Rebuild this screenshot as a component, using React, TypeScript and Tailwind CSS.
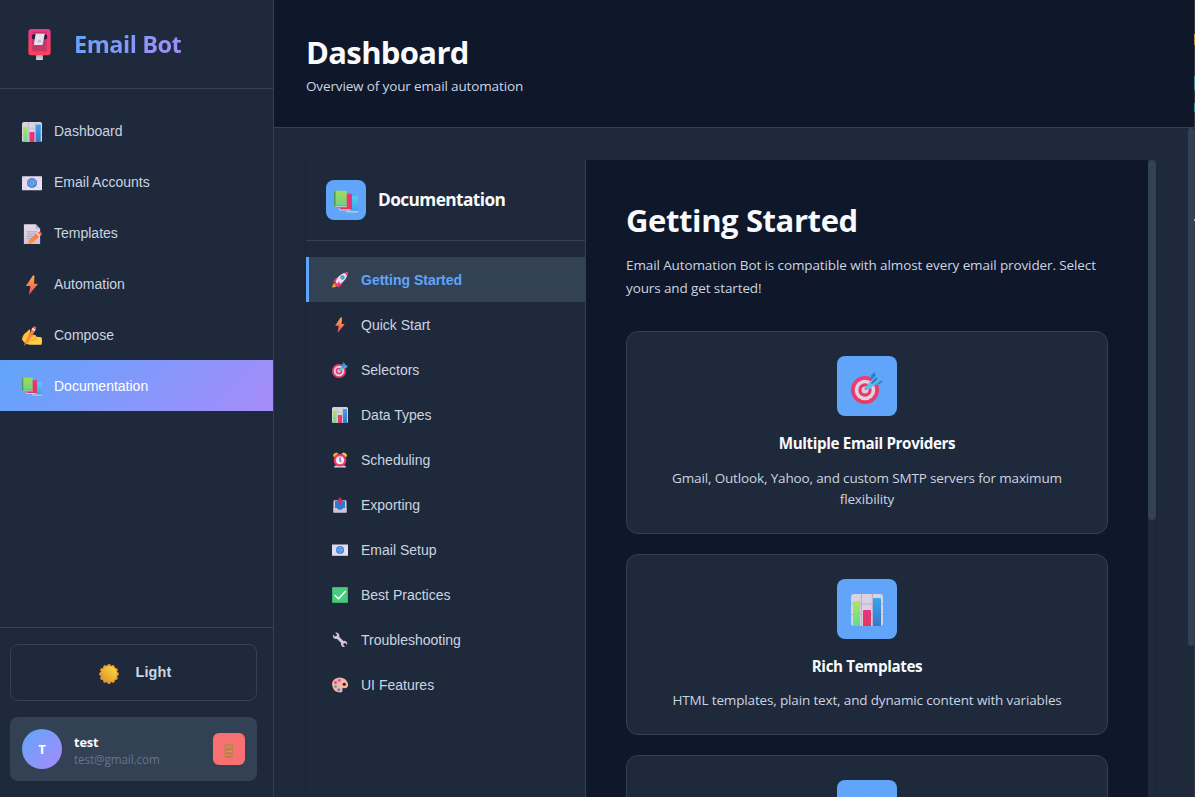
import React from "react";

type IconName =
  | "postbox" | "chart" | "email" | "memo" | "bolt" | "writing" | "books" | "sun" | "door"
  | "rocket" | "target" | "alarm" | "outbox" | "check" | "wrench" | "palette";

const drawings: Record<IconName, React.ReactNode> = {
  postbox: (
    <>
      <rect x="12.5" y="25" width="7" height="7" fill="url(#post)" />
      <rect x="4.5" y="0" width="23" height="27" rx="3" fill="url(#red)" />
      <rect x="8.5" y="2.8" width="15" height="1" rx=".5" fill="#c42a62" />
      <rect x="8.5" y="9" width="15" height="14" rx="1" fill="#c33866" />
      <rect x="8" y="5.2" width="16" height="5.4" rx="2.7" fill="#3c1440" />
      <path d="M12 5H21.500l-2.400 11.5h-9Z" fill="#e6dfee" />
      <path d="M14.500 11h3.500l-.6 3h-3.500Z" fill="#c8bed2" />
    </>
  ),
  chart: (
    <>
      <rect x="0" y="0" width="32" height="32" rx="3" fill="#d9d2e2" />
      <path d="M10.4 0v32M21.4 0v32M0 10h32M0 20.5h32" stroke="#b9b0c3" strokeWidth="1.1" />
      <path d="M2 7.5Q2 7 2.7 7H9v25H2Z" fill="url(#green)" />
      <path d="M12 17q0-1 1-1h6q1 0 1 1v15h-8Z" fill="url(#pink)" />
      <path d="M22 5q0-1 1-1h6q1 0 1 1v27h-8Z" fill="url(#blue)" />
    </>
  ),
  email: (
    <>
      <rect x="0" y="5" width="32" height="22.5" rx="1" fill="url(#paper)" />
      <path d="m1 6 12 10M31 6 19 16M1 27l11-9M31 27l-11-9" stroke="#cbbcdc" strokeWidth=".9" />
      <circle cx="16" cy="16" r="8" fill="#3f7fd4" />
      <circle cx="16" cy="16" r="2.4" fill="none" stroke="#a3c8f2" strokeWidth="1.1" />
      <path d="M18.4 13.5v3q0 2 1.6 1.700 1.500-.6 1.200-3A5.300 5.300 0 1 0 18.700 20.400" fill="none" stroke="#a3c8f2" strokeWidth="1.1" />
    </>
  ),
  memo: (
    <>
      <path d="M3 1.5Q3 .5 4 .5h18l7 7V31q0 1-1 1H4q-1 0-1-1Z" fill="url(#paper2)" />
      <path d="M22 .5v6q0 1 1 1h6Z" fill="#b9acc8" />
      <path d="M8 12.5h16M8 16h16M8 19.5h12M8 23h8" stroke="#9f95ac" strokeWidth="1.2" />
      <path d="m11 26 14-12 4.5 4.5L16 31l-6 .8Z" fill="url(#orange)" />
      <path d="m23 16 2.5-2.200 4.500 4.600-2.400 2.200Z" fill="#e7dfee" />
      <path d="m25.300 14 2-1.500q1.300-.7 2.400.4l1.700 1.900q1 1.200 0 2.200L30 18.500Z" fill="#ff594f" />
    </>
  ),
  bolt: <path d="M17.200 1.200 6.600 16.800q-.5.900.6.900h6.200L11.300 30q-.1 1.500 1 .4L24.800 15q.7-1.100-.5-1.100h-5l.6-11.600q-.5-3-2.700-1.100Z" fill="url(#bolt)" />,
  writing: (
    <>
      <path d="M0 21q1-7 7-11l4-4q3-1 2 2l-1 8 7-2q4 0 4 3l8 1q2 5 0 12H12Q2 27 0 21Z" fill="url(#yellow)" />
      <path d="m13 18 7-2 3 3-8 4M16 24l6-3 4 2" fill="none" stroke="#f29c2f" strokeWidth="1" />
      <path d="M3.500 31.500 4.700 26 17 3l5 2.500L9 28Z" fill="url(#orange)" />
      <path d="m15 5.500 1.800-3 5 2.800-1.700 3Z" fill="#e9dfee" />
      <path d="m17 2.500 1-1.500q1-1.200 2.500-.5l1.800 1q1 .8.500 2L22 5.300Z" fill="#f54a55" />
      <path d="m3.500 31.500.8-4 2.700 1.700Z" fill="#793c58" />
      <path d="M2 22q0-6 6-10l-1 8q-1 3-5 2Z" fill="#ffc533" />
    </>
  ),
  books: (
    <>
      <path d="M16 27h16v3H17q-2-1-1-3Z" fill="#b9c4e6" />
      <path d="M17 8.500h15v19.300H17Z" fill="url(#cyan)" />
      <path d="M7 24h15v3.300H8q-2-1-1-3.300Z" fill="#d5c5df" />
      <path d="M8 5h16v19.500H8Zm0 19.500h16v1H8Z" fill="url(#pink)" />
      <path d="M0 20h17v3H1q-1 0-1-1Z" fill="#d9d7e4" />
      <path d="M0 2.500Q0 1 1.500 1H17v20H0Z" fill="url(#green2)" />
      <path d="M0 2.500Q0 1 1.500 1H2v21H0Z" fill="#459a58" />
      <path d="M0 21h17M1 23.200h16" stroke="#459a58" strokeWidth=".8" />
    </>
  ),
  sun: (
    <>
      {[0, 30, 60, 90, 120, 150, 180, 210, 240, 270, 300, 330].map((angle) => (
        <circle key={angle} cx="16" cy="3.300" r="3.200" fill="#f58b2e" transform={`rotate(${angle} 16 16)`} />
      ))}
      <circle cx="16" cy="16" r="12.800" fill="url(#sun)" />
    </>
  ),
  door: (
    <>
      <rect x="6" y="0" width="19" height="32" rx="1" fill="#b9844f" />
      <rect x="8.500" y="3" width="13" height="29" fill="#cf8a58" />
      <path d="M9 12h12M9 21h12M9 29h12" stroke="#b16a47" strokeWidth="2" />
      <circle cx="20" cy="17" r="1.400" fill="#e8b050" />
    </>
  ),
  rocket: (
    <>
      <path d="M0 31q0-6 5-9l5 5q-3 5-10 4Z" fill="#f59a2f" />
      <path d="m2 19 6-7q3-2 7-1l-6 11ZM13 31l7-6q2-3 1-8l-11 7Z" fill="#e9366a" />
      <path d="M7 22Q9 8 24 2l7-1-1 7q-5 14-20 17Z" fill="url(#paper)" />
      <path d="m24 2 6-1.600q1.800-.2 1.600 1.600L30 8Q27 3 24 2Z" fill="#f43d5c" />
      <path d="m7 20 5 5-5 2-2-2ZM13 19l-4 10 2 2 5-9Z" fill="#f1356a" />
      <circle cx="21" cy="11" r="4.300" fill="#7a8099" />
      <circle cx="21" cy="11" r="2.800" fill="#43a6ee" />
    </>
  ),
  target: (
    <>
      <circle cx="14" cy="18" r="14" fill="url(#targetRed)" />
      <circle cx="14" cy="18" r="10.300" fill="#ddd5e5" />
      <circle cx="14" cy="18" r="6.700" fill="#ec3969" />
      <circle cx="14" cy="18" r="3.500" fill="#d6cfe0" />
      <path d="m14 17.500 6-6.300" stroke="#8f8198" strokeWidth="2" />
      <path d="m16.200 12.800 4.600-5 4 4-5.700 5q-2.600 1.200-4-.6-.7-1.600 1.100-3.400Z" fill="#59c1e9" />
      <path d="m20 8 .2-4.700L23.500 0l1.800 5Zm4 4 4.800.1L32 9l-5-1.800Z" fill="#287fd0" />
      <path d="m20.500 8 5.300-5.300.6 3L31 8l-6 5Z" fill="#4db4e6" />
      <path d="m20.500 11.500 5.500-5.500" stroke="#256bb7" strokeWidth="1.600" />
    </>
  ),
  alarm: (
    <>
      <path d="M4 31q0-3 3-4h18q3 1 3 4Z" fill="#d8c9e7" />
      <path d="M2 8q0-6 7-7l4 2-8 7Q3 10 2 8Z" fill="#f5a52e" />
      <path d="M30 8q0-6-7-7l-4 2 8 7q2 0 3-2Z" fill="#f8c832" />
      <circle cx="16" cy="16.500" r="12.500" fill="url(#targetRed)" />
      <circle cx="16" cy="16.500" r="8.200" fill="#efe8f4" />
      <path d="M16 11v6l2.500 3" fill="none" stroke="#4b3553" strokeWidth="2" />
    </>
  ),
  outbox: (
    <>
      <path d="M3 9q0-3 3-3h20q3 0 3 3v21q0 1-1 1H4q-1 0-1-1Z" fill="#d8cfe6" />
      <path d="M6 7h20v17H6Z" fill="#2b7ccf" />
      <path d="M3 22h7l3 4h6l3-4h7v8q0 1-1 1H4q-1 0-1-1Z" fill="#cfc2dc" />
      <path d="M10 22h12l-3 3.500h-6Z" fill="#2b7ccf" />
      <path d="M14 15V8h-4l6-8 6 8h-4v7Z" fill="#d62a55" />
    </>
  ),
  check: (
    <>
      <rect width="32" height="32" rx="2" fill="#36b267" />
      <rect x="1.800" y="1.500" width="28.600" height="28.600" rx="1" fill="#4bcb7c" />
      <path d="m6 17 7 6.500L26.500 9" fill="none" stroke="#fff" strokeWidth="3" strokeLinecap="round" strokeLinejoin="round" />
    </>
  ),
  wrench: (
    <path d="M2 5.200 6 9l3.200-.8L10 5 6.300 1.500q4-1.200 6.800 1.700 2.400 2.700 1.300 6.100l8.400 8.500q3.500-1 6 1.600 2.700 2.800 1.500 6.400L26.500 22l-3.200.8-.8 3.200 3.800 3.800q-3.700 1.200-6.600-1.500-2.600-2.700-1.600-6.200l-8.300-8.500q-3.600 1.200-6.300-1.400Q.8 9.300 2 5.200Z" fill="#d2c6dc" />
  ),
  palette: (
    <>
      <path d="M0 15Q1 2 15 1q13 0 17 12 1 5-2 8-2 2-6 1-5 0-3 4 1 4-4 5Q2 31 0 15Z" fill="#fab49c" />
      <circle cx="7" cy="11" r="3" fill="#ec3f83" />
      <circle cx="14.500" cy="6.500" r="3" fill="#b45be2" />
      <circle cx="7" cy="19" r="3" fill="#45b5ad" />
      <circle cx="13.500" cy="25.500" r="3" fill="#3b8ff0" />
      <circle cx="24.500" cy="14.500" r="3.200" fill="#1f2437" />
    </>
  ),
};

function Gradient({ id, from, to, diagonal }: { id: string; from: string; to: string; diagonal?: boolean }) {
  return (
    <linearGradient id={id} x1="0" y1="0" x2={diagonal ? "1" : "0"} y2="1">
      <stop stopColor={from} />
      <stop offset="1" stopColor={to} />
    </linearGradient>
  );
}

function IconGradients() {
  return (
    <svg className="absolute h-0 w-0" aria-hidden="true">
      <defs>
        <Gradient id="post" from="#a898b8" to="#ddd0e4" />
        <Gradient id="red" from="#e93a86" to="#fd4058" />
        <Gradient id="green" from="#b5e35a" to="#5ddc90" />
        <Gradient id="green2" from="#a3dc58" to="#6fcf86" />
        <Gradient id="pink" from="#e8328a" to="#e3395a" />
        <Gradient id="blue" from="#38a5f3" to="#3a76c8" />
        <Gradient id="cyan" from="#52cdf5" to="#3fa4e8" />
        <Gradient id="paper" from="#e3d6e8" to="#ece6f8" diagonal />
        <Gradient id="paper2" from="#e4dbe8" to="#cdc3da" />
        <Gradient id="orange" from="#ff6b45" to="#f79b3b" />
        <Gradient id="bolt" from="#ffb03f" to="#f2486b" />
        <Gradient id="yellow" from="#ffb42e" to="#ffd94d" diagonal />
        <Gradient id="targetRed" from="#f03a78" to="#e83c60" />
        <linearGradient id="sun" x1="1" y1="0" x2="0" y2="1">
          <stop stopColor="#ffdf3d" />
          <stop offset="1" stopColor="#d69030" />
        </linearGradient>
      </defs>
    </svg>
  );
}

function Icon({ name, className }: { name: IconName; className: string }) {
  return (
    <svg viewBox="0 0 32 32" className={`shrink-0 ${className}`} aria-hidden="true">
      {drawings[name]}
    </svg>
  );
}

const mainNav: { icon: IconName; label: string; active?: boolean }[] = [
  { icon: "chart", label: "Dashboard" },
  { icon: "email", label: "Email Accounts" },
  { icon: "memo", label: "Templates" },
  { icon: "bolt", label: "Automation" },
  { icon: "writing", label: "Compose" },
  { icon: "books", label: "Documentation", active: true },
];

const docNav: { icon: IconName; label: string; active?: boolean }[] = [
  { icon: "rocket", label: "Getting Started", active: true },
  { icon: "bolt", label: "Quick Start" },
  { icon: "target", label: "Selectors" },
  { icon: "chart", label: "Data Types" },
  { icon: "alarm", label: "Scheduling" },
  { icon: "outbox", label: "Exporting" },
  { icon: "email", label: "Email Setup" },
  { icon: "check", label: "Best Practices" },
  { icon: "wrench", label: "Troubleshooting" },
  { icon: "palette", label: "UI Features" },
];

const features: { icon: IconName; title?: string; text?: string }[] = [
  { icon: "target", title: "Multiple Email Providers", text: "Gmail, Outlook, Yahoo, and custom SMTP servers for maximum flexibility" },
  { icon: "chart", title: "Rich Templates", text: "HTML templates, plain text, and dynamic content with variables" },
  { icon: "bolt" },
];

function Sidebar() {
  return (
    <aside className="flex w-[274px] shrink-0 flex-col border-r border-[#334155] bg-[#1e293b]">
      <div className="flex h-[89px] shrink-0 items-center border-b border-[#334155] pl-6">
        <Icon name="postbox" className="h-[31px] w-[31px]" />
        <span className="ml-[18px] bg-[linear-gradient(135deg,#60a5fa,#a78bfa)] bg-clip-text pl-px text-[23.5px] leading-8 font-bold tracking-[-0.45px] text-transparent">
          Email Bot
        </span>
      </div>
      <nav className="flex flex-1 flex-col pt-4 font-['Liberation_Sans',Arial,sans-serif] text-sm">
        {mainNav.map((item) => (
          <a
            key={item.label}
            className={`flex h-[51px] items-center gap-3 pl-[22px] ${
              item.active ? "bg-[linear-gradient(135deg,#60a5fa,#a78bfa)] text-white" : "text-[#cbd5e1]"
            }`}
          >
            <Icon name={item.icon} className="mt-[3px] h-5 w-5" />
            {item.label}
          </a>
        ))}
      </nav>
      <div className="flex flex-col gap-4 border-t border-[#334155] py-4 pr-4 pl-[10px]">
        <button className="flex h-[57px] items-center justify-center gap-4 rounded-lg border border-[#334155] pt-px pl-1 font-['Liberation_Sans',Arial,sans-serif] text-[14.4px] font-semibold tracking-[0.2px] text-[#cbd5e1]">
          <Icon name="sun" className="mt-px h-5 w-5" />
          Light
        </button>
        <div className="flex h-16 items-center rounded-lg bg-[#334155] px-3">
          <div className="flex h-10 w-10 items-center justify-center rounded-full bg-[linear-gradient(135deg,#60a5fa,#a78bfa)] pt-px text-[13px] font-bold text-white">
            T
          </div>
          <div className="ml-3 flex-1 pt-[2px]">
            <p className="text-[12.7px] leading-[18px] font-bold tracking-[-0.1px] text-[#f8fafc]">test</p>
            <p className="text-[11.7px] leading-[17px] tracking-[-0.1px] text-[#64748b]">test@gmail.com</p>
          </div>
          <button className="flex h-8 w-8 items-center justify-center rounded-md bg-[#f87171]">
            <Icon name="door" className="mt-[3px] h-[14px] w-[14px]" />
          </button>
        </div>
      </div>
    </aside>
  );
}

function DocSidebar() {
  return (
    <aside className="flex w-[280px] shrink-0 flex-col border-r border-[#334155] bg-[#1e293b]">
      <div className="flex h-[81px] items-center gap-3 border-b border-[#334155] pl-5">
        <div className="flex h-10 w-10 items-center justify-center rounded-lg bg-[#60a5fa]">
          <Icon name="books" className="mt-[3px] h-6 w-6" />
        </div>
        <h2 className="text-[17.3px] font-bold tracking-[-0.6px] text-[#f8fafc]">Documentation</h2>
      </div>
      <nav className="flex flex-col pt-4 font-['Liberation_Sans',Arial,sans-serif] text-sm">
        {docNav.map((item) => (
          <a
            key={item.label}
            className={`flex h-[45px] items-center gap-[13px] border-l-[3px] pl-[23px] ${
              item.active
                ? "border-[#60a5fa] bg-[#334155] font-semibold text-[#60a5fa]"
                : "border-transparent text-[#cbd5e1]"
            }`}
          >
            <Icon name={item.icon} className="mt-px h-4 w-4" />
            {item.label}
          </a>
        ))}
      </nav>
    </aside>
  );
}

function DocContent() {
  return (
    <section className="flex flex-1 flex-col bg-[#0f172a] px-10 pt-[39px]">
      <h1 className="text-[31px] leading-[42px] font-bold tracking-[-0.4px] text-[#f8fafc]">Getting Started</h1>
      <p className="mt-[13px] mb-[31px] text-[13.5px] leading-[23px] tracking-[-0.11px] text-[#cbd5e1]">
        Email Automation Bot is compatible with almost every email provider. Select yours and get started!
      </p>
      <div className="flex flex-col gap-5">
        {features.map((feature) => (
          <article
            key={feature.icon}
            className="flex min-h-[181px] flex-col items-center rounded-xl border border-[#334155] bg-[#1e293b] px-6 pt-6 pb-[22px] text-center"
          >
            <div className="flex h-[60px] w-[60px] items-center justify-center rounded-lg bg-[#60a5fa]">
              <Icon name={feature.icon} className="mt-[3px] h-8 w-8" />
            </div>
            {feature.title && (
              <h3 className="mt-4 text-[15.2px] leading-[22px] font-bold tracking-[-0.36px] text-[#f8fafc]">{feature.title}</h3>
            )}
            {feature.text && (
              <p className="mt-[13.5px] text-[13.5px] leading-[21.7px] tracking-[-0.15px] text-[#cbd5e1]">{feature.text}</p>
            )}
          </article>
        ))}
      </div>
    </section>
  );
}

export default function App() {
  return (
    <div className="flex h-[797px] w-[1195px] overflow-hidden bg-[#1e293b] font-['Open_Sans','Noto_Sans',sans-serif]">
      <IconGradients />
      <Sidebar />
      <main className="flex min-w-0 flex-1 flex-col">
        <header className="h-32 shrink-0 border-b border-[#334155] bg-[#0f172a] px-8 pt-[31px]">
          <h1 className="text-[31px] leading-[42px] font-bold tracking-[-0.65px] text-[#f8fafc]">Dashboard</h1>
          <p className="mt-[3px] text-[13.5px] leading-[21px] tracking-[-0.14px] text-[#cbd5e1]">
            Overview of your email automation
          </p>
        </header>
        <div className="flex min-h-0 flex-1 overflow-hidden">
          <div className="flex w-[914px] shrink-0 items-start pt-8 pl-8">
            <div className="flex h-[860px] w-[850px] overflow-hidden shadow-[0_1px_3px_rgba(0,0,0,0.15)]">
              <DocSidebar />
              <DocContent />
              <div className="w-2 bg-[#1e293b]">
                <div className="h-[360px] rounded bg-[#334155]" />
              </div>
            </div>
          </div>
          <div className="flex-1">
            <div className="h-[518px] rounded bg-[#334155]" />
          </div>
        </div>
      </main>
      <div className="flex w-px shrink-0 flex-col bg-[#37393e]">
        <div className="mt-[34px] h-[11px] bg-[#b58a4a]" />
        <div className="mt-[31px] h-[14px] bg-[#3d8e9b]" />
        <div className="mt-[13px] h-[9px] bg-[#3d8e9b]" />
        <div className="mt-[107px] h-[2px] bg-[#a9adb3]" />
      </div>
    </div>
  );
}
